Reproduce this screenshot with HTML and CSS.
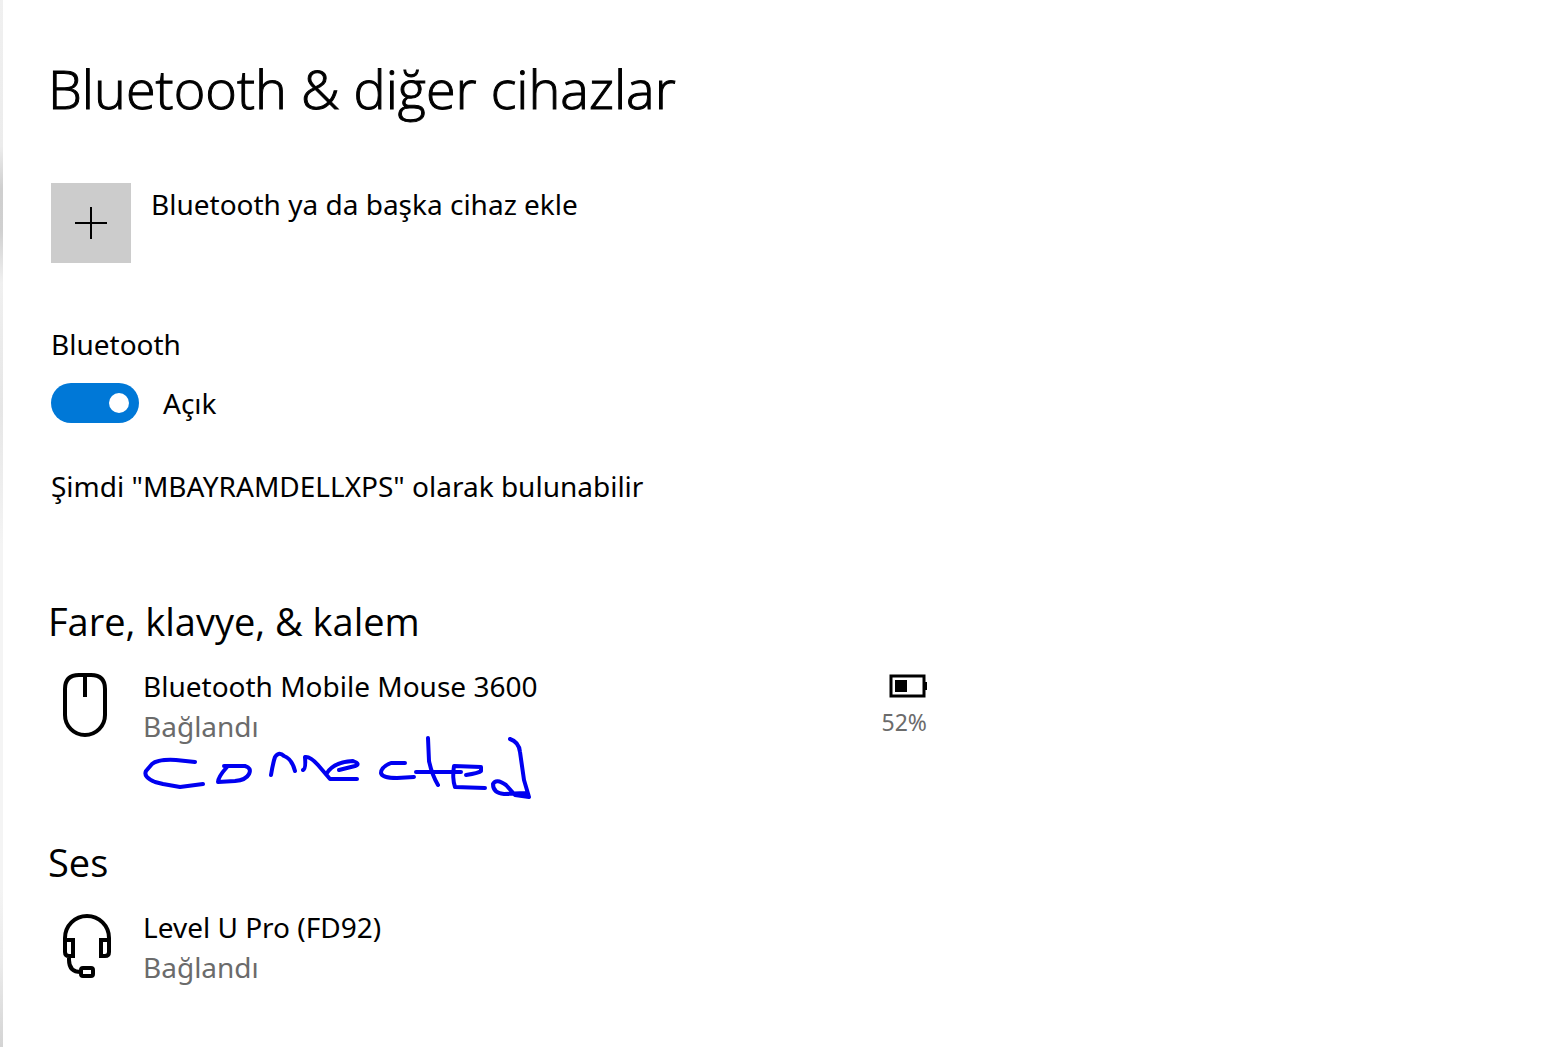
FILE: index.html
```html
<!DOCTYPE html>
<html lang="tr">
<head>
<meta charset="utf-8">
<title>Bluetooth &amp; diğer cihazlar</title>
<link rel="stylesheet" href="styles.css">
</head>
<body>
<main class="page">
    <h1 class="title">Bluetooth &amp; diğer cihazlar</h1>

    <button type="button" class="add">
        <span class="addIcon">
            <svg width="32" height="32" viewBox="0 0 32 32"><path d="M16 0V32M0 16H32" stroke="#000" stroke-width="2"/></svg>
        </span>
        <span class="addText">Bluetooth ya da başka cihaz ekle</span>
    </button>

    <div class="power">
        <label class="line" for="bt">Bluetooth</label>
        <div class="switchRow">
            <input type="checkbox" id="bt" class="switch" checked>
            <span class="line">Açık</span>
        </div>
        <p class="line visible">Şimdi "MBAYRAMDELLXPS" olarak bulunabilir</p>
    </div>

    <section class="group">
        <h2 class="groupTitle">Fare, klavye, &amp; kalem</h2>
        <div class="device">
            <svg class="deviceIcon" width="56" height="64" viewBox="0 0 56 64" fill="none" stroke="#000" stroke-width="4">
                <path d="M18 2H28Q42 2 42 16V42A20 20 0 0 1 2 42V16Q2 2 16 2H18M22 2V24"/>
            </svg>
            <div class="deviceInfo">
                <p class="line">Bluetooth Mobile Mouse 3600</p>
                <p class="line state">Bağlandı</p>
            </div>
            <div class="battery">
                <svg width="38" height="24" viewBox="0 0 38 24">
                    <rect x="2" y="2" width="33" height="20" fill="none" stroke="#000" stroke-width="3"/>
                    <rect x="6" y="6" width="12" height="12"/>
                    <rect x="35" y="8" width="3" height="8"/>
                </svg>
                <span class="percent">52%</span>
            </div>
            <!-- pen note -->
            <svg class="note" width="400" height="68" viewBox="140 734 400 68" fill="none" stroke="#0000f0" stroke-width="4" stroke-linecap="round" stroke-linejoin="round">
                <path d="M195 762L176 760Q158 759 152 764L146 771Q143 777 155 782L163 784L180 787L203 784"/>
                <path d="M224 766H245Q252 768 249 774Q246 780 235 781L218 782Q218 777 227 767"/>
                <path d="M271 775Q273 763 275 757Q279 751 284 756Q292 759 295 771"/>
                <path d="M303 770Q306 769 305 757Q310 756 318 765L330 779L357 779"/>
                <path d="M327 773Q334 762 353 761Q361 764 355 766L339 770"/>
                <path d="M405 763H391Q381 767 381 773Q382 778 397 778L414 777"/>
                <path d="M428 738L429 761Q432 775 438 785M416 772H461"/>
                <path d="M466 775Q479 773 481 771V767L454 766Q452 778 455 787L485 788"/>
                <path d="M510 739Q519 742 520 752L524 780L529 797L515 795L506 785Q496 778 493 784Q493 793 504 794L526 793"/>
            </svg>
        </div>
    </section>

    <section class="group">
        <h2 class="groupTitle">Ses</h2>
        <div class="device">
            <svg class="deviceIcon" width="56" height="64" viewBox="0 0 56 64" fill="none" stroke="#000" stroke-width="4">
                <path d="M2 26V24A22 22 0 0 1 46 24V26M2 24V38Q2 42 6 42H10V26H2M46 26H38V42H42Q46 42 46 38V24M6 42V46Q6 58 18 58"/>
                <rect x="18" y="54" width="12" height="8" rx="2"/>
            </svg>
            <div class="deviceInfo">
                <p class="line">Level U Pro (FD92)</p>
                <p class="line state">Bağlandı</p>
            </div>
        </div>
    </section>
</main>
</body>
</html>
```

FILE: styles.css
```css
*{margin:0; padding:0; box-sizing:border-box;}
body{min-height:100vh; background:#fff linear-gradient(#f0f0f0 0%, #ececec 14%, #cfcfcf 18%, #d0d0d0 22%, #f0f0f0 27%, #e6e6e6 39%, #f4f4f4 52%, #f4f4f4 85%, #ebebeb 92%, #d4d4d4 100%) no-repeat 0 0/3px 100%; color:#000; font-family:"Noto Sans","Open Sans",sans-serif; font-size:28px;}
.page{padding:58px 48px 40px;}
.line{line-height:40px;}
.title{font-family:"Open Sans","Noto Sans",sans-serif; font-size:54px; line-height:60px; font-weight:300; -webkit-text-stroke:1px #000;}

.add{display:flex; gap:20px; margin:65px 0 0 3px; border:0; background:none; font:inherit; color:inherit; text-align:left; cursor:pointer;}
.addIcon{display:flex; flex:none; align-items:center; justify-content:center; width:80px; height:80px; background:#ccc;}
.addText{line-height:42px;}

.power{margin:61px 0 0 3px;}
.power .line{display:block;}
.switchRow{display:flex; align-items:center; gap:24px; margin-top:19px;}
.switch{appearance:none; display:flex; align-items:center; justify-content:flex-end; width:88px; height:40px; padding:10px; border-radius:20px; background:#0078d7; cursor:pointer;}
.switch::before{content:""; width:20px; height:20px; border-radius:50%; background:#fff;}
.switch:not(:checked){justify-content:flex-start; background:#999;}
.visible{margin-top:43px;}

.group{margin-top:91px;}
.group + .group{margin-top:92px;}
.groupTitle{font-family:"Open Sans","Noto Sans",sans-serif; font-size:38px; line-height:48px; font-weight:400;}
.device{position:relative; display:flex; max-width:879px; margin-top:21px;}
.deviceIcon{flex:none; margin:7px 24px 0 15px;}
.deviceInfo{flex:1;}
.state{color:#6b6b6b;}
.battery{display:flex; flex-direction:column; align-items:flex-end; padding-top:8px;}
.percent{font-size:23px; line-height:48px; color:#6b6b6b;}
.note{position:absolute; left:92px; top:68px;}
```
